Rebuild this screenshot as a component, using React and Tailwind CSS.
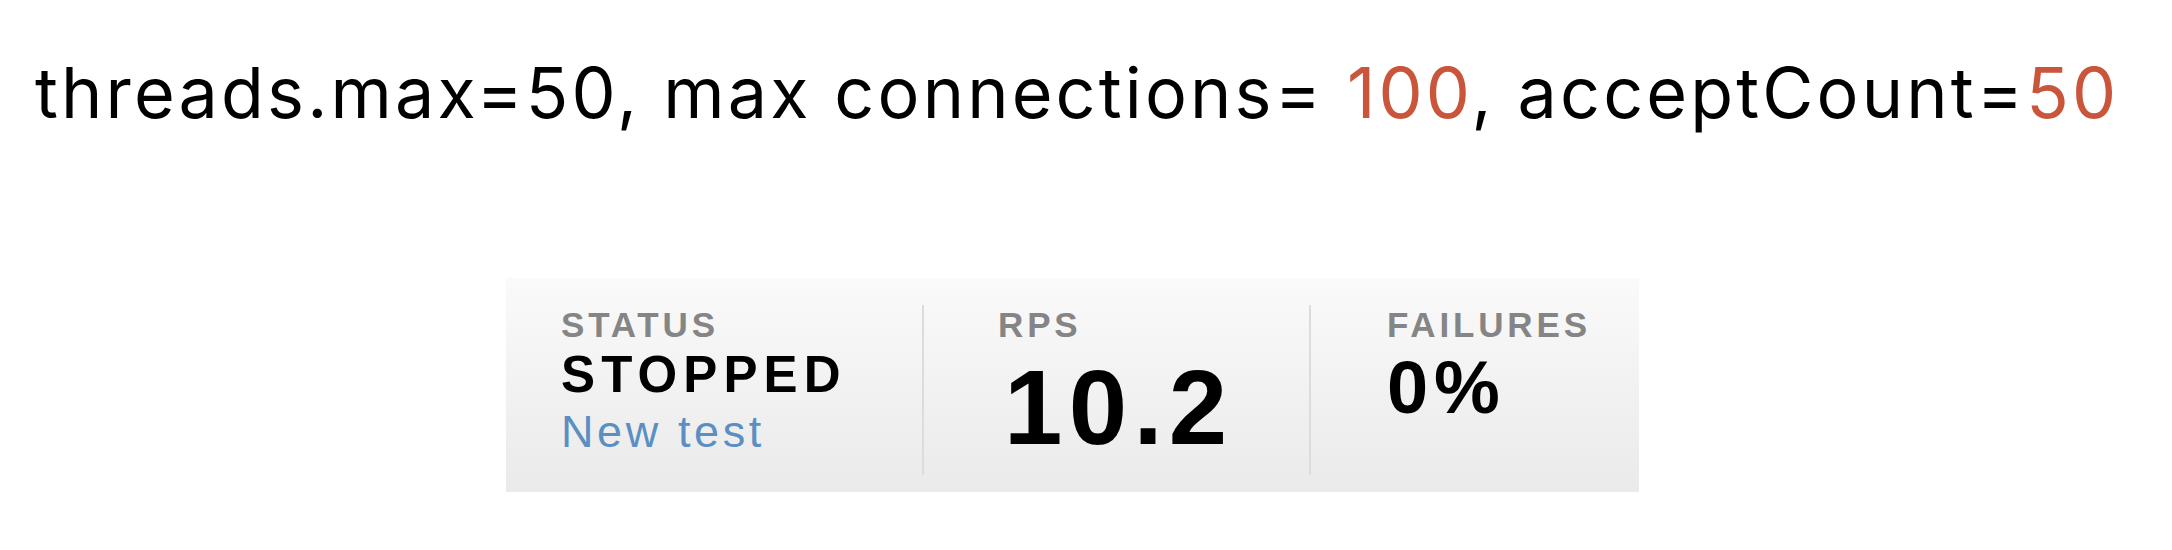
export default function App() {
  return (
    <div className="h-[550px] w-[2172px] overflow-hidden bg-white">
      {/* Slide title */}
      <p className="whitespace-nowrap pl-[35px] pt-[58px] font-['Inter',sans-serif] text-[70px] leading-none tracking-[0.045em] text-black">
        threads.max=50, max connections= <span className="text-[#c9553a]">100</span>, acceptCount=<span className="text-[#c9553a]">50</span>
      </p>

      {/* Locust stats panel */}
      <div className="ml-[506px] mt-[150px] flex h-[214px] w-[1133px] bg-gradient-to-b from-[#fafafa] to-[#eaeaea] font-['Liberation_Sans',Arial,sans-serif]">
        <div className="w-[416px] pl-[55px] pt-[29px]">
          <div className="text-[35px] font-bold leading-none tracking-[0.11em] text-[#858585]">STATUS</div>
          <div className="mt-[7px] text-[51px] font-bold leading-none tracking-[0.12em] text-black">STOPPED</div>
          <div className="mt-[9px] text-[45px] leading-none tracking-[0.08em] text-[#5b8fc2]">New test</div>
        </div>
        <div className="mt-[27px] mb-[17px] w-[2px] bg-[#dcdcdc]" />
        <div className="w-[385px] pl-[74px] pt-[29px]">
          <div className="text-[35px] font-bold leading-none tracking-[0.11em] text-[#858585]">RPS</div>
          <div className="mt-[13px] ml-[6px] text-[105px] font-bold leading-none tracking-[0.06em] text-black">10.2</div>
        </div>
        <div className="mt-[27px] mb-[17px] w-[2px] bg-[#dcdcdc]" />
        <div className="flex-1 pl-[76px] pt-[29px]">
          <div className="text-[35px] font-bold leading-none tracking-[0.11em] text-[#858585]">FAILURES</div>
          <div className="mt-[9px] text-[74px] font-bold leading-none tracking-[0.08em] text-black">0%</div>
        </div>
      </div>
    </div>
  );
}
